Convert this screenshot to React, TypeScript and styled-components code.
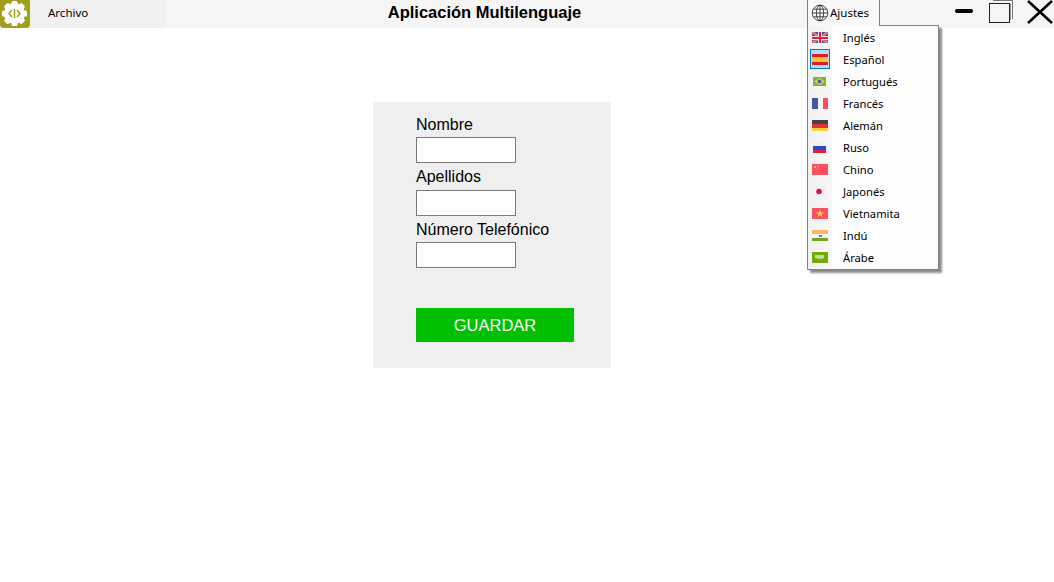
import React, { ReactNode } from 'react';
import styled, { createGlobalStyle } from 'styled-components';

const GlobalStyle = createGlobalStyle`
  html, body { margin: 0; padding: 0; background: #fff; }
  body { font-family: "Liberation Sans", Arial, sans-serif; }
`;

const UI_FONT = '"Noto Sans", "Open Sans", sans-serif';

function FlagSvg({ children }: { children: ReactNode }) {
  return (
    <svg width="16" height="11" viewBox="0 0 16 11" shapeRendering="crispEdges">
      {children}
    </svg>
  );
}

const flags: Record<string, ReactNode> = {
  uk: (
    <FlagSvg>
      <rect width="16" height="11" fill="#3f4f96" />
      <g shapeRendering="auto">
        <path d="M0 0L16 11M16 0L0 11" stroke="#f0c4ca" strokeWidth="2.2" />
        <path d="M0 0L16 11M16 0L0 11" stroke="#d8304a" strokeWidth="1" />
      </g>
      <rect x="6" width="4" height="11" fill="#f7e0e3" />
      <rect y="3.5" width="16" height="4" fill="#f7e0e3" />
      <rect x="7" width="2" height="11" fill="#dc2440" />
      <rect y="4.5" width="16" height="2" fill="#dc2440" />
    </FlagSvg>
  ),
  es: (
    <FlagSvg>
      <rect width="16" height="11" fill="#d8202c" />
      <rect y="3" width="16" height="5" fill="#f6c52e" />
    </FlagSvg>
  ),
  br: (
    <svg width="16" height="11" viewBox="0 0 16 11">
      <rect x="1" y="1" width="13" height="9" fill="#7cb342" />
      <path d="M7.5 2L12.5 5.5L7.5 9L2.5 5.5Z" fill="#f5d63d" />
      <circle cx="7.5" cy="5.5" r="2" fill="#3c5fa8" />
    </svg>
  ),
  fr: (
    <FlagSvg>
      <rect width="5.5" height="11" fill="#4355a5" />
      <rect x="5.5" width="5" height="11" fill="#f7f7f7" />
      <rect x="10.5" width="5.5" height="11" fill="#fb5060" />
    </FlagSvg>
  ),
  de: (
    <FlagSvg>
      <rect width="16" height="4" fill="#444" />
      <rect y="4" width="16" height="3.5" fill="#e0343a" />
      <rect y="7.5" width="16" height="3.5" fill="#fbd040" />
    </FlagSvg>
  ),
  ru: (
    <svg width="16" height="11" viewBox="0 0 16 11" shapeRendering="crispEdges">
      <rect x="1" width="13" height="4" fill="#eef0f4" />
      <rect x="1" y="4" width="13" height="3.5" fill="#2a4cc8" />
      <rect x="1" y="7.5" width="13" height="3.5" fill="#e0203a" />
    </svg>
  ),
  cn: (
    <FlagSvg>
      <rect width="16" height="11" fill="#fb5060" />
      <rect x="2" y="2" width="2" height="2" fill="#f5b04a" />
      <rect x="5" y="1" width="1" height="1" fill="#f5b04a" />
      <rect x="6" y="3" width="1" height="1" fill="#f5b04a" />
      <rect x="5" y="5" width="1" height="1" fill="#f5b04a" />
    </FlagSvg>
  ),
  jp: (
    <svg width="16" height="11" viewBox="0 0 16 11">
      <rect x="1" width="13" height="11" fill="#f1f1f3" />
      <circle cx="7" cy="5.5" r="2.8" fill="#dc1438" />
    </svg>
  ),
  vn: (
    <FlagSvg>
      <rect width="16" height="11" fill="#fb5060" />
      <path d="M8 1.5L9.1 4.4H12L9.7 6.2L10.6 9.2L8 7.4L5.4 9.2L6.3 6.2L4 4.4H6.9Z" fill="#fbd040" shapeRendering="auto" />
    </FlagSvg>
  ),
  in: (
    <FlagSvg>
      <rect width="16" height="3.5" fill="#fbb860" />
      <rect y="3.5" width="16" height="4" fill="#f5f5f7" />
      <rect x="7" y="4.5" width="2.5" height="2.5" fill="#7a78b8" />
      <rect y="7.5" width="16" height="3.5" fill="#6ea812" />
    </FlagSvg>
  ),
  sa: (
    <FlagSvg>
      <rect width="16" height="11" fill="#72ac0c" />
      <rect x="3" y="3" width="9" height="2.5" fill="#c4dc90" />
      <rect x="5" y="6" width="6" height="1" fill="#b2d278" />
    </FlagSvg>
  ),
};

const languages = [
  { name: 'Inglés', flag: 'uk' },
  { name: 'Español', flag: 'es', selected: true },
  { name: 'Portugués', flag: 'br' },
  { name: 'Francés', flag: 'fr' },
  { name: 'Alemán', flag: 'de' },
  { name: 'Ruso', flag: 'ru' },
  { name: 'Chino', flag: 'cn' },
  { name: 'Japonés', flag: 'jp' },
  { name: 'Vietnamita', flag: 'vn' },
  { name: 'Indú', flag: 'in' },
  { name: 'Árabe', flag: 'sa' },
];

function GearLogo() {
  const teeth = Array.from({ length: 8 }, (_, i) => i * 45);
  return (
    <svg width="30" height="28" viewBox="0 0 30 28">
      <g fill="#fff" transform="translate(14.5 13.5)">
        <circle r="10.5" />
        {teeth.map((a) => (
          <rect key={a} x="-3" y="-12.5" width="6" height="4" rx="1.5" transform={`rotate(${a})`} />
        ))}
      </g>
      <path d="M12 10L9 13.5L12 17M17 10L20 13.5L17 17" fill="none" stroke="#a0a01e" strokeWidth="1.5" />
      <path d="M14.5 9V18" stroke="#a0a01e" strokeWidth="1.5" />
    </svg>
  );
}

function GlobeIcon() {
  return (
    <svg width="18" height="18" viewBox="0 0 18 18" fill="none" stroke="#222" strokeWidth="0.8">
      <circle cx="9" cy="9" r="7.8" />
      <ellipse cx="9" cy="9" rx="3.6" ry="7.8" />
      <path d="M9 1.2V16.8M1.2 9H16.8M2.3 5.2H15.7M2.3 12.8H15.7" />
    </svg>
  );
}

function MinimizeIcon() {
  return (
    <svg width="18" height="4" viewBox="0 0 18 4">
      <rect width="18" height="4" rx="2" fill="#000" />
    </svg>
  );
}

function RestoreIcon() {
  return (
    <svg width="24" height="24" viewBox="0 0 24 24" fill="none" shapeRendering="crispEdges">
      <rect x="0.5" y="3.5" width="20" height="19" stroke="#222" fill="#f5f5f5" />
      <path d="M4 0.5H23.5V19" stroke="#777" />
      <path d="M21.5 4V20" stroke="#999" />
    </svg>
  );
}

function CloseIcon() {
  return (
    <svg width="26" height="24" viewBox="0 0 26 24">
      <path d="M1 1L25 23M25 1L1 23" stroke="#000" strokeWidth="2.6" />
    </svg>
  );
}

export default function App() {
  return (
    <Page>
      <GlobalStyle />
      <TitleBar>
        <LogoBox>
          <GearLogo />
        </LogoBox>
        <FileTab>Archivo</FileTab>
        <AppTitle>Aplicación Multilenguaje</AppTitle>
        <SettingsWrap>
          <SettingsTab>
            <GlobeIcon />
            Ajustes
          </SettingsTab>
          <LangMenu>
            {languages.map((lang) => (
              <LangRow key={lang.name}>
                <FlagCell $selected={lang.selected}>{flags[lang.flag]}</FlagCell>
                <LangName>{lang.name}</LangName>
              </LangRow>
            ))}
          </LangMenu>
        </SettingsWrap>
        <WindowControls>
          <MinimizeIcon />
          <RestoreIcon />
          <CloseIcon />
        </WindowControls>
      </TitleBar>
      <Main>
        <FormCard>
          <FieldLabel $tight>Nombre</FieldLabel>
          <TextBox />
          <FieldLabel>Apellidos</FieldLabel>
          <TextBox />
          <FieldLabel $tight>Número Telefónico</FieldLabel>
          <TextBox />
          <SaveButton>GUARDAR</SaveButton>
        </FormCard>
      </Main>
    </Page>
  );
}

const Page = styled.div`
  width: 1054px;
  height: 582px;
  overflow: hidden;
  background: #fff;
`;

const TitleBar = styled.header`
  display: flex;
  height: 28px;
  background: #f5f5f5;
`;

const LogoBox = styled.div`
  flex: none;
  width: 30px;
  height: 28px;
  background: #a0a01e;
  border-radius: 0 0 4px 4px;
`;

const FileTab = styled.div`
  flex: none;
  width: 136px;
  box-sizing: border-box;
  padding-left: 18px;
  background: #f0f0f0;
  color: #000;
  font-family: ${UI_FONT};
  font-size: 11.5px;
  line-height: 25px;
`;

const AppTitle = styled.h1`
  flex: 1;
  margin: 0;
  padding-right: 4px;
  font-size: 16.5px;
  font-weight: 700;
  line-height: 25px;
  text-align: center;
  color: #000;
`;

const SettingsWrap = styled.div`
  flex: none;
  position: relative;
  width: 73px;
`;

const SettingsTab = styled.div`
  position: relative;
  z-index: 3;
  display: flex;
  align-items: center;
  gap: 1px;
  box-sizing: border-box;
  height: 26px;
  padding: 0 0 1px 3px;
  border: solid #808080;
  border-width: 0 1px;
  background: #f8f8f8;
  font-family: ${UI_FONT};
  font-size: 11.5px;
  color: #000;
`;

const LangMenu = styled.div`
  position: absolute;
  top: 25px;
  left: 0;
  z-index: 2;
  box-sizing: border-box;
  width: 132px;
  height: 245px;
  border: 1px solid #808080;
  background: linear-gradient(to right, #f1f1f1 0, #f7f7f7 24px, #fdfdfd 24px);
  box-shadow: 3px 3px 2px rgba(0, 0, 0, 0.45);
`;

const LangRow = styled.div`
  display: flex;
  align-items: center;
  height: 22px;
`;

const FlagCell = styled.div<{ $selected?: boolean }>`
  display: flex;
  align-items: center;
  justify-content: center;
  box-sizing: border-box;
  width: 20px;
  height: 20px;
  margin-left: 2px;
  border: 1px solid ${(p) => (p.$selected ? '#0078d7' : 'transparent')};
  background: ${(p) => (p.$selected ? '#b8daf6' : 'transparent')};
`;

const LangName = styled.span`
  margin-left: 13px;
  font-family: ${UI_FONT};
  font-size: 11.2px;
  color: #000;
`;

const WindowControls = styled.div`
  flex: none;
  width: 174px;
  box-sizing: border-box;
  display: flex;
  align-items: flex-start;
  padding: 0 0 0 75px;
  gap: 16px;

  svg:first-child { margin-top: 9px; }
  svg:nth-child(3) { margin-left: -2px; }
`;

const Main = styled.main`
  padding: 74px 0 0 373px;
`;

const FormCard = styled.section`
  display: flex;
  flex-direction: column;
  align-items: flex-start;
  box-sizing: border-box;
  width: 238px;
  height: 266px;
  padding: 14px 0 0 43px;
  background: #efefef;
`;

const FieldLabel = styled.label<{ $tight?: boolean }>`
  font-size: 16px;
  line-height: 18px;
  margin-bottom: ${(p) => (p.$tight ? '3px' : '4px')};
  color: #000;
`;

const TextBox = styled.input`
  box-sizing: border-box;
  width: 100px;
  height: 26px;
  margin: 0 0 5px;
  padding: 0 2px;
  border: 1px solid #7a7a7a;
  border-radius: 0;
  background: #fff;
`;

const SaveButton = styled.button`
  width: 158px;
  height: 34px;
  margin-top: 35px;
  padding: 0;
  border: 0;
  background: #00c000;
  color: #fff;
  font-family: "Liberation Sans", Arial, sans-serif;
  font-size: 16.5px;
`;
